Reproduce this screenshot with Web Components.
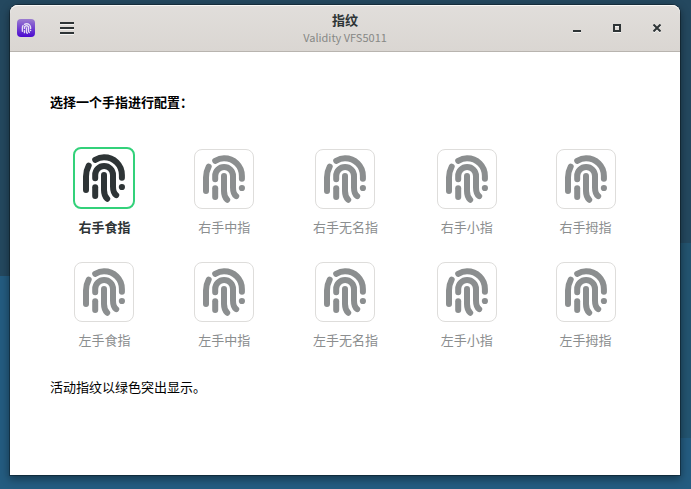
<!DOCTYPE html>
<html lang="zh-CN">
<head>
<meta charset="utf-8">
<title>指纹</title>
<style>
html { height: 100%; }
body {
  margin: 0; min-height: 100%; box-sizing: border-box; padding: 5px 11px 14px 10px;
  display: flex; flex-direction: column;
  font: 13px/20px "Noto Sans CJK SC", "Noto Sans", sans-serif; color: #000;
  background:
    linear-gradient(#24485f 0 243px, #235470 243px 438px, #245c80 438px) right / 50% 100% no-repeat,
    linear-gradient(#24485f 0 276px, #245c80 276px) left / 51% 100% no-repeat;
}
</style>
</head>
<body>
<app-window>
  <header-bar slot="header" subtitle="Validity VFS5011">指纹</header-bar>
  <finger-chooser>
    <span slot="title">选择一个手指进行配置：</span>
    <finger-button active>右手食指</finger-button>
    <finger-button>右手中指</finger-button>
    <finger-button>右手无名指</finger-button>
    <finger-button>右手小指</finger-button>
    <finger-button>右手拇指</finger-button>
    <finger-button>左手食指</finger-button>
    <finger-button>左手中指</finger-button>
    <finger-button>左手无名指</finger-button>
    <finger-button>左手小指</finger-button>
    <finger-button>左手拇指</finger-button>
    <span slot="note">活动指纹以绿色突出显示。</span>
  </finger-chooser>
</app-window>

<script>
class BaseElement extends HTMLElement {
  connectedCallback() {
    if (!this.shadowRoot) this.attachShadow({ mode: "open" }).innerHTML = this.render();
  }
}

class AppWindow extends BaseElement {
  render() {
    return `<style>
      :host { flex: 1; display: flex; flex-direction: column; background: #fff;
        border-radius: 8px 8px 0 0; box-shadow: 0 0 0 1px rgba(0,0,0,.3), 0 3px 9px 1px rgba(0,0,0,.4); }
      main { flex: 1; }
    </style>
    <slot name="header"></slot><main><slot></slot></main>`;
  }
}

class FingerprintIcon extends BaseElement {
  render() {
    return `<style>
      :host { display: block; }
      svg { display: block; width: 100%; height: 100%; }
    </style>
    <svg viewBox="0 0 48 48" fill="none" stroke="currentColor" stroke-width="6" stroke-linecap="round" aria-hidden="true">
      <path d="M8.7 11.6C6.9 15 6 18 6 22.5V36"/>
      <path d="M15.2 5.8C18 4.2 21 3.3 24 3.3C34 3.3 41.9 11 41.9 21V23.8"/>
      <path d="M15.2 24.3V21A8.9 8.9 0 0 1 33 21V32.5C33 36.5 33.8 39.4 36.2 41.2"/>
      <path d="M15.2 33.3V42"/>
      <path d="M24 21V36C24 40 25 42.5 27.2 44.8"/>
      <circle cx="41.9" cy="33" r="3.1" fill="currentColor" stroke="none"/>
    </svg>`;
  }
}

class HeaderBar extends BaseElement {
  render() {
    return `<style>
      :host { display: grid; grid-template-columns: 1fr auto 1fr; align-items: center; height: 47px;
        box-sizing: border-box; padding: 0 7px; color: #2e3436;
        background: linear-gradient(#e1dedb, #dad6d2); border-bottom: 1px solid #b8b4af;
        border-radius: 8px 8px 0 0; box-shadow: inset 0 1px #f8f7f6; }
      .start { display: flex; align-items: center; gap: 16px; }
      .end { display: flex; justify-content: flex-end; gap: 8px; }
      .logo { display: grid; place-items: center; width: 18px; height: 18px; border-radius: 4px;
        color: #e6e0f5; background: linear-gradient(#9b7cd0, #4a08d0); }
      fingerprint-icon { width: 11px; height: 11px; }
      .titles { text-align: center; }
      h1 { margin: 0; font-size: 13px; line-height: 18px; font-weight: 700; }
      p { margin: 0; font-size: 11px; line-height: 16px; color: #878886; }
      button { display: grid; place-items: center; width: 32px; height: 32px; padding: 0; border: 0;
        background: none; color: inherit; }
      svg { display: block; filter: drop-shadow(0 1px rgba(255,255,255,.7)); }
    </style>
    <div class="start">
      <div class="logo"><fingerprint-icon></fingerprint-icon></div>
      <button aria-label="菜单"><svg width="14" height="12" fill="currentColor"><path d="M0 0h14v2H0zM0 5h14v2H0zM0 10h14v2H0z"/></svg></button>
    </div>
    <div class="titles"><h1><slot></slot></h1><p>${this.getAttribute("subtitle")}</p></div>
    <div class="end">
      <button aria-label="最小化"><svg width="8" height="8" fill="currentColor"><path d="M0 6h8v2H0z"/></svg></button>
      <button aria-label="最大化"><svg width="8" height="8" fill="none" stroke="currentColor" stroke-width="2"><path d="M1 1h6v6H1z"/></svg></button>
      <button aria-label="关闭"><svg width="8" height="8" fill="none" stroke="currentColor" stroke-width="2"><path d="M.5 .5l7 7M7.5 .5l-7 7"/></svg></button>
    </div>`;
  }
}

class FingerButton extends BaseElement {
  render() {
    return `<style>
      :host { display: block; color: #8b8e8f; }
      :host([active]) { color: #2e3436; font-weight: 700; }
      button { display: flex; flex-direction: column; align-items: center; gap: 8px; margin: 0 auto;
        padding: 0; border: 0; background: none; font: inherit; color: inherit; white-space: nowrap; }
      .tile { padding: 5px; border: 1px solid #dedddb; border-radius: 8px; background: #fff; }
      :host([active]) .tile { border: 2px solid #33d17a; }
      fingerprint-icon { width: 48px; height: 48px; }
    </style>
    <button aria-pressed="${this.hasAttribute("active")}">
      <span class="tile"><fingerprint-icon></fingerprint-icon></span>
      <span><slot></slot></span>
    </button>`;
  }
}

class FingerChooser extends BaseElement {
  render() {
    return `<style>
      :host { display: block; padding: 40px; }
      h2 { margin: 0; font-size: 13px; line-height: 20px; font-weight: 700; }
      .grid { display: grid; grid-template-columns: repeat(5, auto); align-items: end;
        gap: 25px 12px; margin: 35px 1px 27px 0; }
      p { margin: 0; }
    </style>
    <h2><slot name="title"></slot></h2>
    <div class="grid"><slot></slot></div>
    <p><slot name="note"></slot></p>`;
  }
}

customElements.define("fingerprint-icon", FingerprintIcon);
customElements.define("app-window", AppWindow);
customElements.define("header-bar", HeaderBar);
customElements.define("finger-button", FingerButton);
customElements.define("finger-chooser", FingerChooser);
</script>
</body>
</html>
